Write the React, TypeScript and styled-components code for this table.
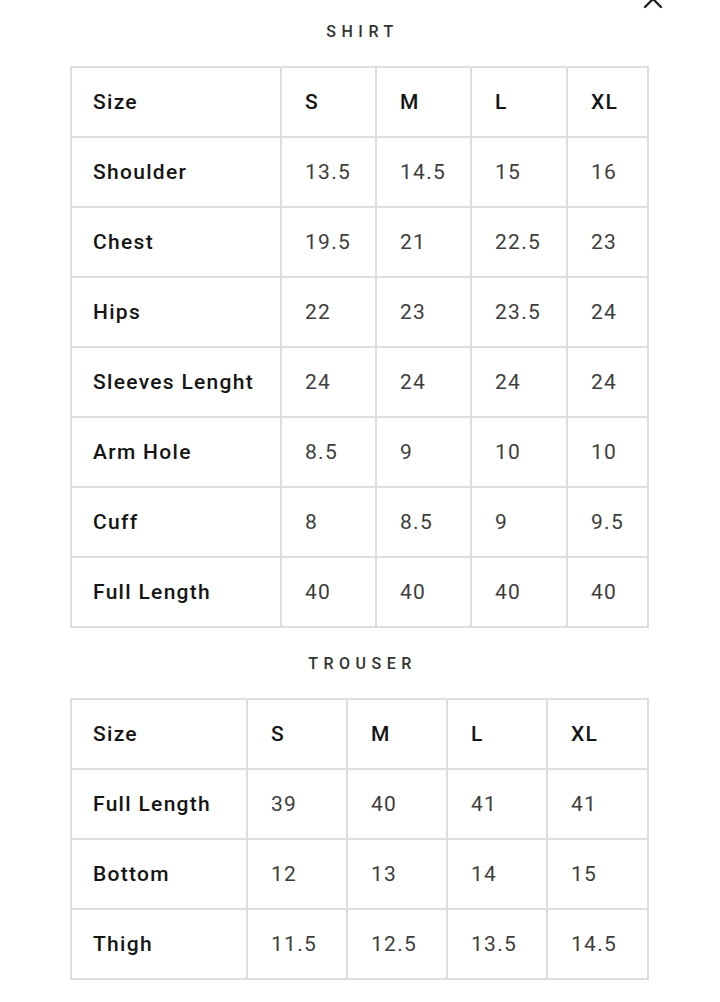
import React from 'react';
import styled, { createGlobalStyle } from 'styled-components';

const GlobalStyle = createGlobalStyle`
  html, body {
    margin: 0;
    padding: 0;
    background: #ffffff;
  }
  body {
    font-family: Roboto, 'Liberation Sans', Arial, sans-serif;
  }
`

const Page = styled.div`
  position: relative;
  width: 720px;
  height: 1002px;
  overflow: hidden;
  padding-top: 22px;
  box-sizing: border-box;
`

const CloseButton = styled.div`
  position: absolute;
  top: -12px;
  right: 56px;
  width: 22px;
  height: 22px;
  color: #222;
`

const Section = styled.section`
  display: flex;
  flex-direction: column;
  align-items: center;
  margin-bottom: 26px;
`

const Title = styled.h2`
  margin: 0 0 24px 0;
  font-size: 16px;
  font-weight: 500;
  letter-spacing: 5.5px;
  padding-left: 5px;
  color: #333;
  line-height: 20px;
`

const Table = styled.table`
  border-collapse: collapse;
  table-layout: fixed;
  width: 577px;
  margin-right: 1px;
`

const Cell = styled.td<{ $head?: boolean; $label?: boolean }>`
  border: 2px solid #dedede;
  height: 68px;
  padding: 0 0 0 ${p => (p.$label ? 21 : 23)}px;
  font-size: 21px;
  letter-spacing: 1.3px;
  color: ${p => (p.$head ? '#151515' : '#3d3d3d')};
  font-weight: ${p => (p.$head ? 500 : 400)};
  text-align: left;
  vertical-align: middle;
  white-space: nowrap;
`

interface ISizeTableProps {
  title: string
  widths: number[]
  rows: string[][]
}

const SizeTable: React.FC<ISizeTableProps> = ({ title, widths, rows }: ISizeTableProps) => (
  <Section>
    <Title>{title}</Title>
    <Table>
      <colgroup>
        {widths.map((w, i) => <col key={i} style={{ width: w }} />)}
      </colgroup>
      <tbody>
        {rows.map((row, r) => (
          <tr key={row[0]}>
            {row.map((value, c) => (
              <Cell key={c} $head={r === 0 || c === 0} $label={c === 0}>{value}</Cell>
            ))}
          </tr>
        ))}
      </tbody>
    </Table>
  </Section>
)

const shirt = [
  ['Size', 'S', 'M', 'L', 'XL'],
  ['Shoulder', '13.5', '14.5', '15', '16'],
  ['Chest', '19.5', '21', '22.5', '23'],
  ['Hips', '22', '23', '23.5', '24'],
  ['Sleeves Lenght', '24', '24', '24', '24'],
  ['Arm Hole', '8.5', '9', '10', '10'],
  ['Cuff', '8', '8.5', '9', '9.5'],
  ['Full Length', '40', '40', '40', '40'],
]

const trouser = [
  ['Size', 'S', 'M', 'L', 'XL'],
  ['Full Length', '39', '40', '41', '41'],
  ['Bottom', '12', '13', '14', '15'],
  ['Thigh', '11.5', '12.5', '13.5', '14.5'],
]

const App: React.FC = () => (
  <Page>
    <GlobalStyle />
    <CloseButton>
      <svg width="22" height="22" viewBox="0 0 22 22">
        <path d="M3 3 L19 19 M19 3 L3 19" stroke="currentColor" strokeWidth="2.4" strokeLinecap="round" />
      </svg>
    </CloseButton>
    <SizeTable title="SHIRT" widths={[210, 95, 95, 96, 81]} rows={shirt} />
    <SizeTable title="TROUSER" widths={[176, 100, 100, 100, 101]} rows={trouser} />
  </Page>
)

export default App
